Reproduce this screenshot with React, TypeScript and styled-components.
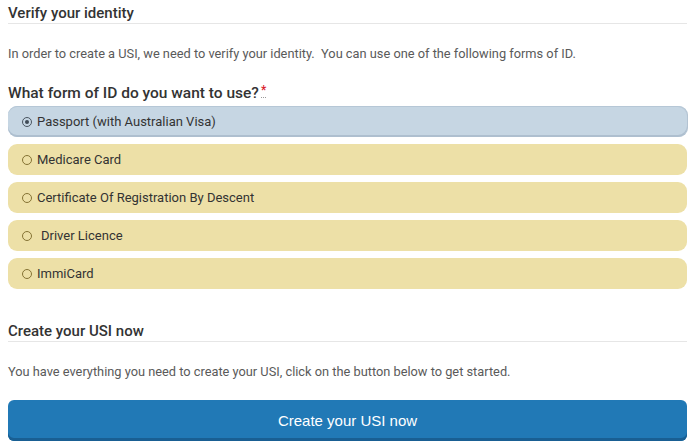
import React from "react";
import styled, { createGlobalStyle } from "styled-components";

const Global = createGlobalStyle`
  html, body { margin: 0; padding: 0; background: #fff; }
  body { font-family: Roboto, "Liberation Sans", Arial, sans-serif; }
`;

const Page = styled.div`
  padding: 5px 7px 0 8px;
  display: flex;
  flex-direction: column;
`;

const SectionTitle = styled.h2<{ $top?: number }>`
  margin: ${(p) => p.$top ?? 0}px 0 0;
  padding: 0 0 1px;
  font-size: 15px;
  line-height: 17px;
  font-weight: 500;
  color: #333;
  border-bottom: 1px solid #e6e6e6;
`;

const Para = styled.p<{ $top: number }>`
  margin: ${(p) => p.$top}px 0 0;
  font-size: 12.8px;
  line-height: 16px;
  color: #5a5a5a;
`;

const Question = styled.div`
  margin-top: 22px;
  font-size: 15.5px;
  line-height: 18px;
  font-weight: 500;
  color: #333;
`;

const Req = styled.abbr`
  color: #d9232d;
  font-size: 12px;
  margin-left: 2px;
  text-decoration: none;
  border-bottom: 1px dotted #999;
  vertical-align: top;
  line-height: 13px;
`;

const Options = styled.div`
  margin-top: 4px;
  display: flex;
  flex-direction: column;
  gap: 7px;
`;

const Option = styled.label<{ $selected?: boolean }>`
  display: flex;
  align-items: center;
  height: 31px;
  box-sizing: border-box;
  padding-left: 14px;
  border-radius: 9px;
  background: ${(p) => (p.$selected ? "#c6d6e3" : "#ede0a7")};
  box-shadow: ${(p) =>
    p.$selected
      ? "inset 0 -2px 0 #aebfcf, inset 0 1px 0 #b6c7d6, 1px 0 0 #b3c3d2"
      : "none"};
  font-size: 13px;
  color: #333;
  cursor: pointer;
`;

const Radio = styled.span<{ $checked?: boolean }>`
  width: 10px;
  height: 10px;
  box-sizing: border-box;
  border-radius: 50%;
  border: 1.6px solid ${(p) => (p.$checked ? "#4a5560" : "#857334")};
  margin-right: 5px;
  display: flex;
  align-items: center;
  justify-content: center;
  flex: none;
  &::after {
    content: "";
    width: 4px;
    height: 4px;
    border-radius: 50%;
    background: #3f4a55;
    display: ${(p) => (p.$checked ? "block" : "none")};
  }
`;

const OptionText = styled.span<{ $indent?: number }>`
  padding-left: ${(p) => p.$indent ?? 0}px;
`;

const Button = styled.button`
  margin-top: 20px;
  height: 41px;
  border: none;
  border-radius: 6px;
  background: #2179b6;
  box-shadow: inset 0 -3px 0 #195f93;
  color: #fff;
  font-family: "Liberation Sans", Arial, sans-serif;
  font-size: 15px;
  padding-bottom: 2px;
  cursor: pointer;
`;

const options = [
  { label: "Passport (with Australian Visa)", selected: true },
  { label: "Medicare Card" },
  { label: "Certificate Of Registration By Descent" },
  { label: "Driver Licence", indent: 4 },
  { label: "ImmiCard" },
];

export default function App() {
  return (
    <>
      <Global />
      <Page>
        <SectionTitle>Verify your identity</SectionTitle>
        <Para $top={22}>
          In order to create a USI, we need to verify your identity.&nbsp; You can use one of the
          following forms of ID.
        </Para>
        <Question>
          What form of ID do you want to use?<Req title="required">*</Req>
        </Question>
        <Options>
          {options.map((o) => (
            <Option key={o.label} $selected={o.selected}>
              <Radio $checked={o.selected} />
              <OptionText $indent={o.indent}>{o.label}</OptionText>
            </Option>
          ))}
        </Options>
        <SectionTitle $top={34}>Create your USI now</SectionTitle>
        <Para $top={22}>
          You have everything you need to create your USI, click on the button below to get started.
        </Para>
        <Button>Create your USI now</Button>
      </Page>
    </>
  );
}
